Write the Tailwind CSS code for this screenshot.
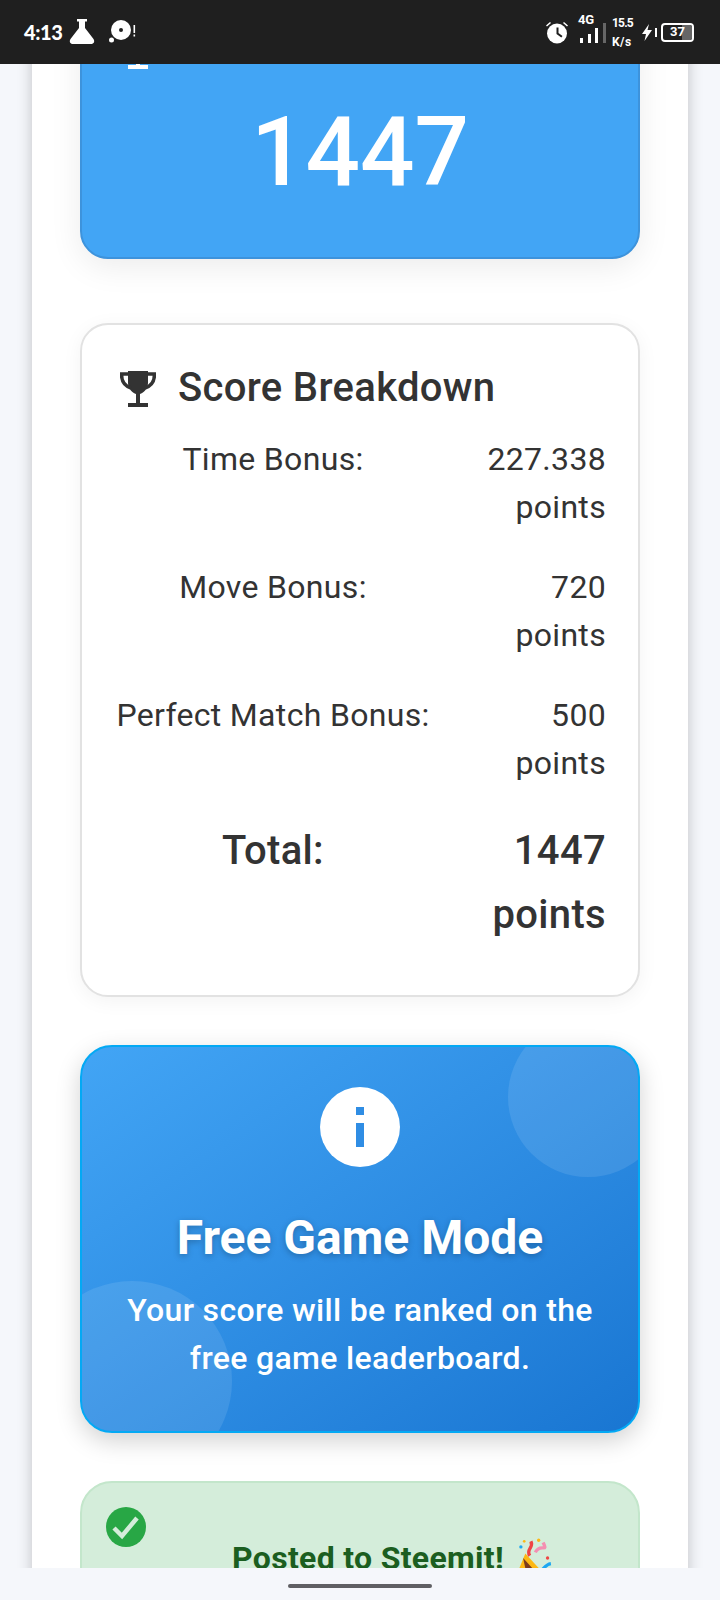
<!DOCTYPE html>
<html lang="en">
<head>
  <meta charset="UTF-8">
  <meta name="viewport" content="width=device-width, initial-scale=1.0">
  <title>Game Result</title>
  <script src="https://cdn.jsdelivr.net/npm/@tailwindcss/browser@4"></script>
</head>
<body class="w-[720px] h-[1600px] overflow-hidden flex flex-col bg-[#f5f7fb] font-['Roboto',sans-serif] text-[#333] tracking-[0.32px]">

  <!-- Status bar -->
  <div class="h-[64px] shrink-0 bg-[#1f1f1f] text-white flex items-center justify-between pl-[24px] pr-[26px] relative z-10 tracking-normal">
    <div class="flex items-center">
      <span class="font-['Lato',sans-serif] font-black text-[20px] tracking-[-0.4px] w-[45px]">4:13</span>
      <svg class="w-[26px] h-[26px]" viewBox="0 0 26 26" fill="#fff"><path d="M8 0H18V2.5H16V9L24.5 20C26 22.5 25 25 22 25H4C1 25 0 22.5 1.5 20L10 9V2.5H8Z"/></svg>
      <svg class="ml-[14px] w-[28px] h-[24px]" viewBox="0 0 28 24" fill="#fff"><circle cx="12" cy="10" r="10"/><circle cx="12" cy="10" r="2" fill="#1f1f1f"/><circle cx="2.5" cy="20" r="2.5"/><rect x="24.5" y="5" width="1.6" height="8"/><rect x="24.5" y="14.5" width="1.6" height="2"/></svg>
    </div>
    <div class="flex items-center">
      <svg class="w-[24px] h-[24px]" viewBox="0 0 24 24" fill="#fff"><circle cx="12" cy="13.5" r="10"/><path d="M11.5 7.5H13.5V13L17.5 16L16.3 17.5L11.5 14Z" fill="#1f1f1f"/><path d="M1 5.5L5 2L6 3L2 6.5ZM23 5.5L19 2L18 3L22 6.5Z"/></svg>
      <div class="ml-[9px] -mt-[6px] w-[20px] relative h-[28px]">
        <span class="absolute -top-[2px] left-0 text-[13px] font-bold leading-[14px] tracking-[-0.3px]">4G</span>
        <div class="absolute bottom-0 left-[2px] flex items-end gap-[4.5px]">
          <i class="block w-[3px] h-[5px] bg-white"></i>
          <i class="block w-[3px] h-[9px] bg-white"></i>
          <i class="block w-[3px] h-[15px] bg-white"></i>
        </div>
      </div>
      <i class="block ml-[5px] mt-[2px] w-[3px] h-[20px] bg-[#666]"></i>
      <div class="ml-[6px] w-[24px] text-[12px] font-bold leading-[14px] flex flex-col gap-[5px] tracking-[-0.8px]">
        <span>15.5</span>
        <span class="tracking-[0.4px]">K/s</span>
      </div>
      <svg class="ml-[6px] w-[10px] h-[17px]" viewBox="0 0 10 17" fill="#fff"><path d="M7 0L0 10H4L2.5 17L10 6H5.5Z"/></svg>
      <i class="block ml-[3px] w-[2px] h-[9px] bg-white"></i>
      <div class="ml-[4px] relative w-[33px] h-[19px] rounded-[4px] border-2 border-white overflow-hidden flex items-center justify-center">
        <i class="absolute right-0 top-0 bottom-0 w-[10px] bg-[#666]"></i>
        <span class="relative text-[13px] font-bold">37</span>
      </div>
    </div>
  </div>

  <!-- Scrolled page -->
  <div class="flex-1 min-h-0 overflow-hidden">
    <div class="mx-[32px] w-[656px] h-[1700px] bg-white px-[48px] shadow-[0_0_14px_rgba(0,0,0,0.22)]">

      <!-- Score card, its top is scrolled away -->
      <div class="-mt-[66px] h-[261px] rounded-[28px] bg-[#42a5f5] border-2 border-[#3d93dc] text-white pt-[33px] pl-[38px] shadow-[0_8px_32px_rgba(0,0,0,0.08)]">
        <svg class="w-[36px] h-[36px]" viewBox="0 0 36 36" fill="#fff"><path d="M8 0H28V12C28 18 23 22 20 23V32H28V36H8V32H16V23C13 22 8 18 8 12Z"/></svg>
        <div class="-ml-[38px] mt-[27px] text-center text-[96px] leading-[112px] font-medium tracking-normal">1447</div>
      </div>

      <!-- Score breakdown -->
      <div class="mt-[64px] h-[674px] rounded-[28px] bg-white border-2 border-[#e2e2e2] px-[32px] pt-[39px] shadow-[0_4px_20px_rgba(0,0,0,0.05)]">
        <div class="flex items-center h-[48px]">
          <svg class="ml-[6px] mt-[2px] w-[36px] h-[36px]" viewBox="0 0 36 36" fill="#333"><path d="M8 0H28V12C28 18 23 22 20 23V32H28V36H8V32H16V23C13 22 8 18 8 12Z"/><path d="M9 3H1.5C1.5 10 4 15 11 17M27 3H34.5C34.5 10 32 15 25 17" fill="none" stroke="#333" stroke-width="3.5"/></svg>
          <h2 class="ml-[22px] text-[40px] font-medium leading-[48px]">Score Breakdown</h2>
        </div>
        <div class="mt-[23px] flex flex-col gap-[32px] text-[32px] leading-[48px]">
          <div class="flex justify-between">
            <span class="w-[318px] text-center">Time Bonus:</span>
            <span class="w-[130px] text-right">227.338 points</span>
          </div>
          <div class="flex justify-between">
            <span class="w-[318px] text-center">Move Bonus:</span>
            <span class="w-[130px] text-right">720 points</span>
          </div>
          <div class="flex justify-between">
            <span class="w-[318px] text-center">Perfect Match Bonus:</span>
            <span class="w-[130px] text-right">500 points</span>
          </div>
          <div class="flex justify-between text-[40px] leading-[64px] font-medium">
            <span class="w-[318px] text-center">Total:</span>
            <span class="w-[130px] text-right">1447 points</span>
          </div>
        </div>
      </div>

      <!-- Free game mode -->
      <div class="relative mt-[48px] h-[388px] rounded-[32px] border-2 border-[#03a9f4] bg-linear-to-br from-[#42a5f5] to-[#1976d2] overflow-hidden shadow-[0_8px_24px_rgba(0,0,0,0.18)] text-white text-center">
        <div class="absolute -top-[30px] -right-[30px] w-[160px] h-[160px] rounded-full bg-white/10"></div>
        <div class="absolute -bottom-[50px] -left-[50px] w-[200px] h-[200px] rounded-full bg-white/10"></div>
        <div class="relative flex flex-col items-center pt-[40px]">
          <div class="w-[80px] h-[80px] rounded-full bg-white flex flex-col items-center justify-center gap-[8px]">
            <i class="block w-[8px] h-[8px] bg-[#2f8de4]"></i>
            <i class="block w-[8px] h-[24px] bg-[#2f8de4]"></i>
          </div>
          <h2 class="mt-[35px] text-[48px] leading-[72px] font-bold tracking-normal [text-shadow:0_2px_6px_rgba(0,0,0,0.25)]">Free Game Mode</h2>
          <p class="mt-[12px] text-[32px] leading-[48px] font-medium">Your score will be ranked on the<br>free game leaderboard.</p>
        </div>
      </div>

      <!-- Posted notice -->
      <div class="relative mt-[48px] h-[200px] rounded-[32px] border-2 border-[#c3e6cb] bg-[#d4edda] text-[#1b5e20] text-center">
        <svg class="absolute top-[24px] left-[24px] w-[40px] h-[40px]" viewBox="0 0 40 40"><circle cx="20" cy="20" r="20" fill="#28a745"/><path d="M8 21L16 29L31 11" fill="none" stroke="#d4edda" stroke-width="4.5"/></svg>
        <div class="pt-[51px] flex items-center justify-center gap-[8px] pl-[64px] text-[32px] leading-[48px] font-bold">
          <span>Posted to Steemit!</span>
          <svg class="w-[40px] h-[40px]" viewBox="0 0 36 36">
            <path d="M3 36L12 14L24 27Z" fill="#fdb813"/>
            <path d="M10 18L20 29L13 32Z" fill="#7a3b1e"/>
            <path d="M16 16C12 10 20 9 17 3" fill="none" stroke="#ef4444" stroke-width="3"/>
            <path d="M21 13C25 4 33 14 28 4" fill="none" stroke="#f48fb1" stroke-width="3"/>
            <path d="M22 30C28 32 28 24 35 23" fill="none" stroke="#1ca7f2" stroke-width="3"/>
            <circle cx="8" cy="8" r="1.5" fill="#1ca7f2"/><circle cx="24" cy="2" r="1.5" fill="#fdb813"/><circle cx="32" cy="18" r="1.5" fill="#ef4444"/><circle cx="11" cy="3" r="1.2" fill="#fdb813"/>
          </svg>
        </div>
      </div>
    </div>
  </div>

  <!-- Gesture bar -->
  <div class="h-[32px] shrink-0 bg-[#f5f7fb] flex justify-center pt-[16px] relative z-10">
    <div class="w-[144px] h-[4px] rounded-full bg-[#5f5f63]"></div>
  </div>
</body>
</html>
